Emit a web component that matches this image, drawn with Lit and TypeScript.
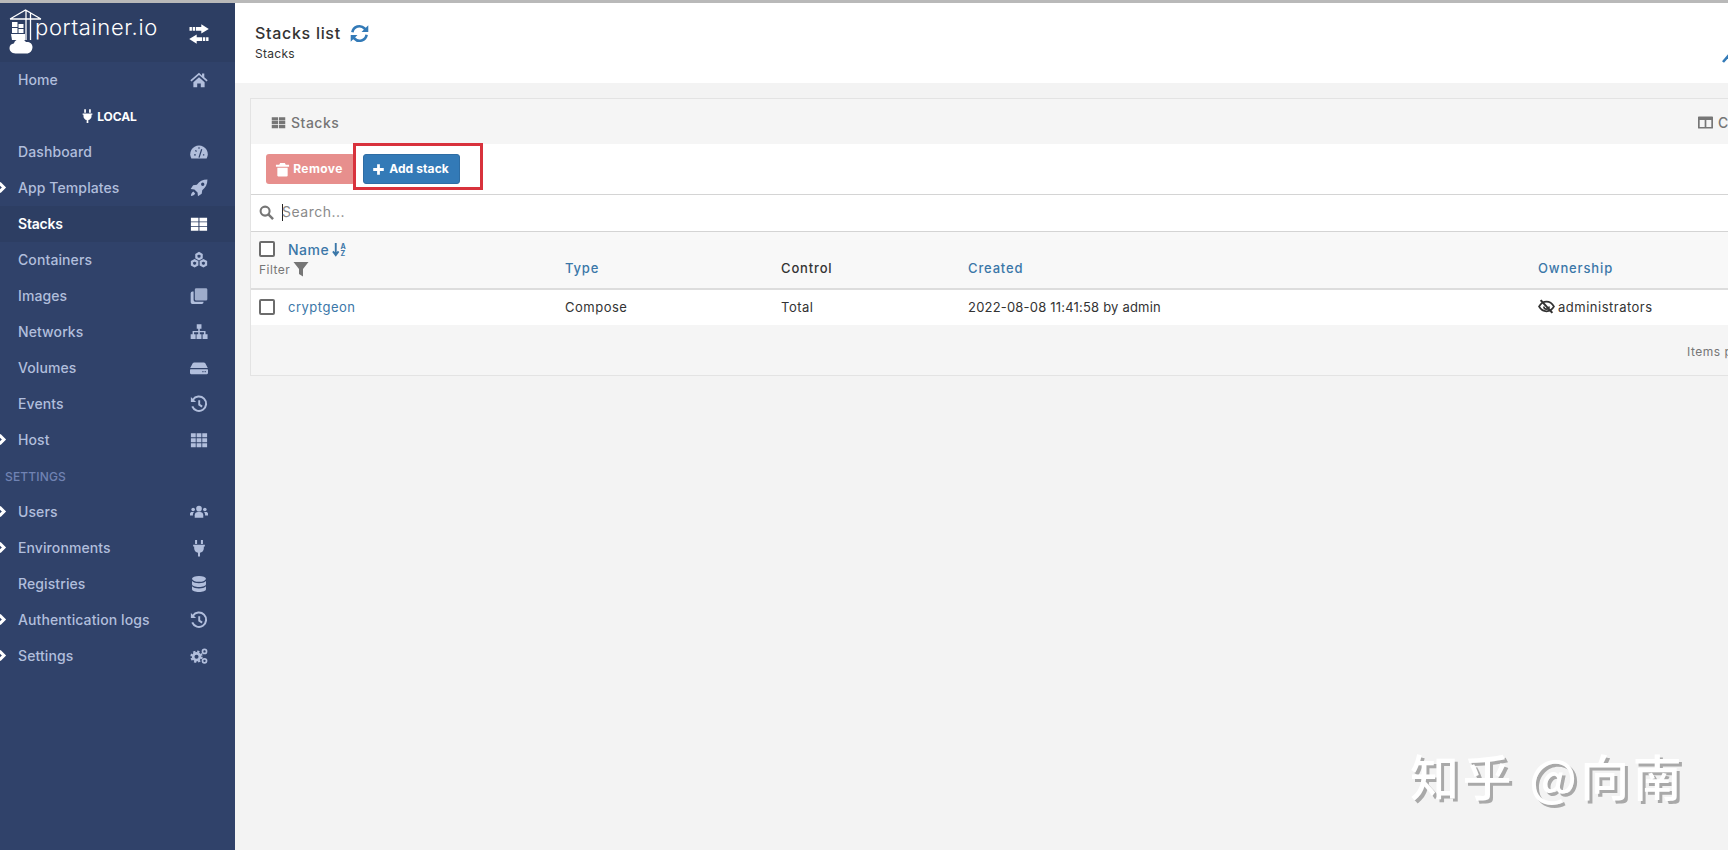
import { LitElement, html, css, svg } from "lit";
import { customElement } from "lit/decorators.js";

const hex = (cx: number, cy: number, r: number) => {
  const p: string[] = [];
  for (let i = 0; i < 6; i++) {
    const a = (Math.PI / 3) * i + Math.PI / 6;
    p.push(`${(cx + r * Math.cos(a)).toFixed(2)},${(cy + r * Math.sin(a)).toFixed(2)}`);
  }
  return p.join(" ");
};

const historyIcon = svg`<path d="M2.600 4.200A6.400 6.400 0 1 1 2 10.200" fill="none" stroke="currentColor" stroke-width="1.800"/><path d="M.8 1.800 5.400 6.200H.8z" fill="currentColor"/><path d="M8.200 4.600V8.600l2.600 1.700" fill="none" stroke="currentColor" stroke-width="1.700"/>`;

const icons: Record<string, unknown> = {
  home: svg`<path fill="currentColor" d="M8 1.600.3 8.200l1 1.100L8 3.600l6.700 5.700 1-1.100-3-2.600V2.200h-2v2.100zM3 9.900 8 5.600l5 4.300v4.600H9.600V11H6.400v3.500H3z"/>`,
  dash: svg`<path fill="currentColor" d="M8 2.200A7.800 7.800 0 0 0 1.200 13.800h13.600A7.800 7.800 0 0 0 8 2.200z"/><path d="M8 13 10.400 5.600M3.600 10.600h1.600M11.500 10.600h1.200M4.800 6.600l1 1M8 3.800v1.200" stroke="#30426a" stroke-width="1.100" fill="none"/>`,
  rocket: svg`<path fill="currentColor" fill-rule="evenodd" d="M15.500.5c-4.200 0-7.200 1.600-9.400 4.600L2.800 5.600.6 8.900l3.300.4 2.800 2.800.4 3.300 3.300-2.200.5-3.300c3-2.200 4.600-5.200 4.600-9.400zM11.300 3.200a1.500 1.500 0 1 1 0 3 1.500 1.500 0 0 1 0-3zM3 11.200c-1.300.6-2 2-2.200 3.800 1.800-.2 3.200-.9 3.800-2.200z"/>`,
  table: svg`<path fill="currentColor" d="M.8 2.400h6.700v3.400H.8zM8.400 2.400h6.800v3.400H8.400zM.8 6.500h6.700v3.400H.8zM8.400 6.500h6.800v3.400H8.400zM.8 10.600h6.700V14H.8zM8.400 10.600h6.800V14H8.400z"/>`,
  cubes: svg`<g fill="none" stroke="currentColor" stroke-width="2"><polygon points="${hex(8, 4.6, 2.7)}"/><polygon points="${hex(4.1, 10.9, 2.7)}"/><polygon points="${hex(11.9, 10.9, 2.7)}"/></g>`,
  clone: svg`<path fill="currentColor" opacity=".85" d="M5.500 1h8.700a1.200 1.200 0 0 1 1.200 1.200v8.600a1.200 1.200 0 0 1-1.200 1.200H5.500a1.200 1.200 0 0 1-1.200-1.200V2.200A1.200 1.200 0 0 1 5.500 1z"/><path fill="currentColor" d="M3.200 4v7.600A1.400 1.400 0 0 0 4.600 13H12v.6a1.500 1.500 0 0 1-1.500 1.500H2.100A1.500 1.500 0 0 1 .6 13.600V5.500A1.500 1.500 0 0 1 2.100 4z"/>`,
  sitemap: svg`<path fill="currentColor" d="M6 1h4.200v4H8.700v2h5.100v3h1.800v4.200h-4.400V10h1.200V8.300H8.700V10h1.500v4.200H5.800V10h1.500V8.300H3.600V10h1.400v4.200H.6V10h1.700V7h5V5H6z"/>`,
  hdd: svg`<path fill="currentColor" fill-rule="evenodd" d="M3.800 3h8.400c.6 0 1.100.3 1.400.8L15.800 8H.2l2.200-4.200C2.700 3.300 3.200 3 3.800 3zM.6 9h14.800c.3 0 .6.300.6.600v2.900c0 .6-.5 1-1 1H1c-.5 0-1-.4-1-1V9.600C0 9.300.3 9 .6 9zM11 10.700v1.100h1v-1.100zM13 10.700v1.100h1v-1.100z"/>`,
  history: historyIcon,
  th: svg`<path fill="currentColor" d="M.8 2h4.300v3.600H.8zM5.900 2h4.200v3.600H5.900zM10.900 2h4.300v3.600h-4.300zM.8 6.400h4.300V10H.8zM5.900 6.400h4.200V10H5.900zM10.900 6.400h4.300V10h-4.300zM.8 10.800h4.300v3.600H.8zM5.900 10.800h4.200v3.600H5.900zM10.900 10.800h4.300v3.600h-4.300z"/>`,
  users: svg`<g fill="currentColor"><circle cx="8" cy="5" r="2.500"/><circle cx="2.800" cy="5.800" r="1.600"/><circle cx="13.200" cy="5.800" r="1.600"/><path d="M4.200 13.200v-2.400C4.200 9 5.500 8 7 8h2c1.500 0 2.800 1 2.800 2.800v2.400z"/><path d="M0 11V9.400C0 8.400.8 7.900 1.800 7.900h1.700c-.6.600-.9 1.500-.9 2.400V11zM16 11V9.400c0-1-.8-1.500-1.800-1.500h-1.700c.6.600.9 1.500.9 2.400V11z"/></g>`,
  plug: svg`<path fill="currentColor" d="M4.500.8h1.800v3.700H4.500zM9.700.8h1.800v3.700H9.700zM2.800 5.200h10.400v1.500h-.9v1.600c0 2.300-1.700 3.800-3.400 4v3.200H7.100v-3.200C5.400 12.100 3.700 10.600 3.700 8.300V6.700h-.9z"/>`,
  db: svg`<g fill="currentColor"><ellipse cx="8" cy="3.400" rx="6.200" ry="2.600"/><path d="M1.800 5.400C3 6.900 5.400 7.300 8 7.300s5-.4 6.200-1.900v2.800c0 1.500-2.800 2.400-6.200 2.400s-6.200-.9-6.200-2.400z"/><path d="M1.800 10c1.200 1.500 3.600 1.900 6.200 1.900s5-.4 6.200-1.900v2.600c0 1.500-2.800 2.400-6.200 2.400s-6.200-.9-6.200-2.400z"/></g>`,
  cogs: svg`<g fill="none" stroke="currentColor"><circle cx="5.800" cy="8.600" r="3" stroke-width="2.400"/><circle cx="5.800" cy="8.600" r="4.600" stroke-width="1.800" stroke-dasharray="2 1.620"/><circle cx="12.900" cy="3.900" r="1.800" stroke-width="1.500"/><circle cx="12.900" cy="12.300" r="1.800" stroke-width="1.500"/></g>`,
};

const ic = (name: string, cls = "ic") =>
  html`<svg class=${cls} viewBox="0 0 16 16" aria-hidden="true">${icons[name]}</svg>`;

interface Item { label: string; icon: string; chev?: boolean; active?: boolean; }
const top: Item[] = [
  { label: "Dashboard", icon: "dash" },
  { label: "App Templates", icon: "rocket", chev: true },
  { label: "Stacks", icon: "table", active: true },
  { label: "Containers", icon: "cubes" },
  { label: "Images", icon: "clone" },
  { label: "Networks", icon: "sitemap" },
  { label: "Volumes", icon: "hdd" },
  { label: "Events", icon: "history" },
  { label: "Host", icon: "th", chev: true },
];
const bottom: Item[] = [
  { label: "Users", icon: "users", chev: true },
  { label: "Environments", icon: "plug", chev: true },
  { label: "Registries", icon: "db" },
  { label: "Authentication logs", icon: "history", chev: true },
  { label: "Settings", icon: "cogs", chev: true },
];

@customElement("app-root")
export class AppRoot extends LitElement {
  static styles = css`
    :host {
      display: block;
      width: 1728px;
      height: 850px;
      overflow: hidden;
      position: relative;
      background: #f3f3f3;
      font-family: Inter, "Noto Sans", sans-serif;
      color: #333;
      font-size: 13px;
      letter-spacing: 0.5px;
    }
    .topline { height: 3px; background: #b9b9b9; }
    .shell { display: flex; height: 847px; }
    .side { width: 235px; flex: none; background: #30426a; color: #b1bedc; }
    .brand { height: 59px; background: #2d3e63; display: flex; align-items: flex-start; }
    .logo { width: 34px; height: 46px; margin: 6px 0 0 9px; flex: none; }
    .wordmark {
      color: #fff;
      font-size: 22px;
      font-weight: 300;
      letter-spacing: 0.65px;
      line-height: 26px;
      margin: 11px 0 0 -8px;
      width: 154px;
      flex: none;
    }
    .swap { width: 20px; height: 20px; margin-top: 21px; color: #fff; flex: none; }
    .row {
      height: 36px;
      display: grid;
      grid-template-columns: 1fr 20px;
      align-items: center;
      padding: 0 26px 0 18px;
      font-size: 14px;
      font-weight: 500;
      position: relative;
      letter-spacing: 0.1px;
    }
    .row > span { margin-top: -2px; }
    .row.active { background: #2d3e63; color: #fff; font-weight: 600; letter-spacing: -0.2px; }
    .ic { width: 18px; height: 18px; justify-self: center; }
    .chev { position: absolute; left: -4px; top: 12px; width: 11px; height: 11px; }
    .env {
      height: 36px;
      display: flex;
      align-items: center;
      justify-content: center;
      gap: 2px;
      color: #fff;
      font-size: 12px;
      font-weight: 700;
      padding-right: 18px;
      letter-spacing: -0.1px;
    }
    .env svg { width: 15px; height: 16px; }
    .section {
      height: 36px;
      line-height: 37px;
      padding-left: 5px;
      color: #7083b3;
      font-size: 12px;
      font-weight: 500;
      letter-spacing: 0.15px;
    }
    .main { width: 1600px; flex: none; }
    .head { height: 80px; background: #fff; display: grid; grid-template-columns: 1487px 1fr; }
    .titles { padding: 20px 0 0 20px; }
    .title { display: flex; align-items: center; gap: 9px; font-size: 16px; font-weight: 500; line-height: 20px; letter-spacing: 0.7px; }
    .refresh { width: 19px; height: 19px; color: #337ab7; }
    .crumb { font-size: 12px; line-height: 14px; margin-top: 4px; letter-spacing: 0.3px; }
    .wrench { width: 16px; height: 16px; margin-top: 44px; color: #337ab7; }
    .widget { margin: 15px 0 0 15px; width: 1570px; border: 1px solid #e3e3e3; background: #f5f5f5; }
    .wh {
      height: 45px;
      background: #f5f5f5;
      display: grid;
      grid-template-columns: 1447px 1fr;
      align-items: center;
      color: #767676;
      font-size: 14px;
      padding-top: 1px;
      box-sizing: border-box;
    }
    .wh-l { display: flex; align-items: center; gap: 5px; padding-left: 20px; font-weight: 500; }
    .wh-r { display: flex; align-items: center; gap: 5px; font-weight: 500; }
    .wh svg { width: 15px; height: 15px; }
    .tools {
      height: 50px;
      background: #fff;
      border-bottom: 1px solid #d4d4d4;
      display: flex;
      align-items: center;
      gap: 8px;
      padding: 0 0 0 15px;
    }
    .btn {
      height: 30px;
      border-radius: 3px;
      display: flex;
      align-items: center;
      justify-content: center;
      gap: 4px;
      color: #fff;
      font-size: 12px;
      font-weight: 700;
      box-sizing: border-box;
      letter-spacing: 0.1px;
    }
    .btn span { margin-top: -1px; }
    .btn svg { width: 13px; height: 13px; }
    .rm { width: 89px; background: #e78f8d; letter-spacing: 0.4px; gap: 3px; padding-right: 3px; }
    .rm svg { width: 15px; height: 15px; }
    .add { width: 97px; background: #337ab7; border: 1px solid #2e6da4; padding-right: 2px; }
    .search {
      height: 36px;
      background: #fff;
      border-bottom: 1px solid #d4d4d4;
      display: flex;
      align-items: center;
      padding-left: 8px;
      color: #8a8a8a;
      font-size: 14px;
    }
    .search > span:last-child { margin: -3px 0 0 -1px; }
    .search svg { width: 15px; height: 15px; color: #767676; flex: none; margin-top: -2px; }
    .caret { width: 1px; height: 17px; background: #222; margin: -2px 0 0 8px; }
    .grid { display: grid; grid-template-columns: 306px 216px 187px 570px 1fr; }
    .thead { height: 56px; background: #f8f8f8; border-bottom: 2px solid #ddd; }
    .thead > div { padding: 0 0 12px 8px; align-self: end; font-weight: 500; font-size: 13px; letter-spacing: 0.85px; }
    .link { color: #3b77a8; }
    .check {
      width: 16px;
      height: 16px;
      border: 2px solid #6c6c6c;
      border-radius: 2px;
      box-sizing: border-box;
      background: #fff;
      flex: none;
    }
    .namehead { display: flex; align-items: center; gap: 13px; height: 20px; margin-bottom: 3px; font-size: 14px; letter-spacing: 0.5px; }
    .sort { width: 15px; height: 15px; margin-left: 3px; vertical-align: -2px; }
    .filter { display: flex; align-items: center; gap: 3px; color: #767676; font-size: 12px; font-weight: 400; line-height: 16px; letter-spacing: 0.45px; }
    .filter svg { width: 16px; height: 16px; margin-top: -3px; }
    .thead > .c1 { padding: 0 0 10px 8px; }
    .tbody { height: 35px; background: #fff; align-items: center; }
    .tbody > div { padding: 0 0 2px 8px; }
    .tbody > .date { letter-spacing: 0.2px; }
    .cname { display: flex; align-items: center; gap: 13px; }
    .own { display: flex; align-items: center; gap: 3px; }
    .own svg { width: 17px; height: 17px; }
    .foot {
      height: 50px;
      background: #f5f5f5;
      display: grid;
      grid-template-columns: 1436px 1fr;
      align-items: center;
      color: #767676;
      font-size: 12px;
    }
    .foot span { grid-column: 2; margin-top: 3px; white-space: nowrap; }
    .mark {
      position: absolute;
      left: 353px;
      top: 143px;
      width: 130px;
      height: 47px;
      border: 3px solid #d8323c;
      box-sizing: border-box;
    }
    .zhihu {
      position: absolute;
      left: 1410px;
      top: 742px;
      font-family: "Noto Sans CJK SC", sans-serif;
      font-size: 49px;
      font-weight: 500;
      line-height: 66px;
      color: #fff;
      text-shadow: 3px 3px 0 #a9a9a9;
      letter-spacing: 3.4px;
      white-space: pre;
    }
  `;

  private row(i: Item) {
    return html`<div class="row ${i.active ? "active" : ""}">
      ${i.chev
        ? html`<svg class="chev" viewBox="0 0 10 10"><path d="M3.200 1 7.200 5 3.200 9" fill="none" stroke="#fff" stroke-width="2.800"/></svg>`
        : ""}
      <span>${i.label}</span>${ic(i.icon)}
    </div>`;
  }

  render() {
    return html`
      <div class="topline"></div>
      <div class="shell">
        <nav class="side">
          <div class="brand">
            <svg class="logo" viewBox="0 0 34 46">
              <g fill="none" stroke="#fff" stroke-width="1.300">
                <path d="M1 10 16.500 1 32 10M1 10H32M17 1V31M21.500 3.500V31"/>
              </g>
              <path fill="#fff" d="M3 13h5.500v5H3zM9.500 15h5v4h-5zM3 19h5.500v5H3zM9.500 20h5v4h-5z"/>
              <path fill="#fff" d="M2 25h14v6H3z"/>
              <path fill="#fff" d="M6.500 44.500c-3.800 0-6-2.300-6-5.400 0-2.800 2-4.500 4.300-4.700C6 31.300 8.600 29.800 11.400 29.800c2.500 0 4.500 1.300 5.500 3.200 3.200-.6 6.600 1.400 6.600 5 0 3.800-2.700 6.500-6 6.500z"/>
            </svg>
            <div class="wordmark">portainer.io</div>
            <svg class="swap" viewBox="0 0 20 20" fill="currentColor">
              <path d="M.5 3h2.400v3.800H.5zM3.700 3H6v3.800H3.700zM6.800 3H12.300V.2L19.800 4.900 12.300 9.600V6.800H6.800z"/>
              <path d="M19.500 13.200h-2.400V17h2.400zM16.300 13.200H14V17h2.300zM13.200 13.200H7.700v-2.800L.2 15.100l7.500 4.700V17h5.500z"/>
            </svg>
          </div>
          ${this.row({ label: "Home", icon: "home" })}
          <div class="env"><svg viewBox="0 0 16 16">${icons.plug}</svg><span>LOCAL</span></div>
          ${top.map((i) => this.row(i))}
          <div class="section">SETTINGS</div>
          ${bottom.map((i) => this.row(i))}
        </nav>
        <main class="main">
          <header class="head">
            <div class="titles">
              <div class="title">
                <span>Stacks list</span>
                <svg class="refresh" viewBox="0 0 16 16" fill="none" stroke="currentColor" stroke-width="2.200">
                  <path d="M2 7a6 6 0 0 1 10.300-3.200L14 5.500"/><path d="M14 9a6 6 0 0 1-10.300 3.200L2 10.500"/>
                  <path d="M15.400 1v5.700H9.700zM.6 15V9.300h5.700z" fill="currentColor" stroke="none"/>
                </svg>
              </div>
              <div class="crumb">Stacks</div>
            </div>
            <svg class="wrench" viewBox="0 0 16 16"><path d="M1 15 8 7" stroke="currentColor" stroke-width="2.600" fill="none"/><path fill="currentColor" d="M6.500 5.500C7 2.500 10 .5 13.500 1.500L10.500 4.500l1.200 1.500z"/></svg>
          </header>

          <section class="widget">
            <div class="wh">
              <div class="wh-l"><svg viewBox="0 0 16 16">${icons.table}</svg><span>Stacks</span></div>
              <div class="wh-r">
                <svg viewBox="0 0 16 16"><path fill="currentColor" fill-rule="evenodd" d="M1 1.500h14c.5 0 1 .4 1 1v11c0 .6-.5 1-1 1H1c-.5 0-1-.4-1-1v-11c0-.6.5-1 1-1zM1.800 5.200v7.500h5.300V5.200zM8.900 5.200v7.500h5.300V5.200z"/></svg>
                <span>Columns</span>
              </div>
            </div>
            <div class="tools">
              <div class="btn rm">
                <svg viewBox="0 0 16 16"><path fill="currentColor" d="M5.500 1h5l1 2H15v2H1V3h3.500zM2.500 6h11v8.500c0 .6-.5 1-1 1h-9c-.5 0-1-.4-1-1z"/></svg>
                <span>Remove</span>
              </div>
              <div class="btn add">
                <svg viewBox="0 0 16 16"><path fill="currentColor" d="M6.300 1.500h3.400v4.800h4.800v3.400H9.700v4.800H6.300V9.700H1.500V6.300h4.800z"/></svg>
                <span>Add stack</span>
              </div>
            </div>
            <div class="search">
              <svg viewBox="0 0 16 16"><circle cx="6.500" cy="6.500" r="4.800" fill="none" stroke="currentColor" stroke-width="2.200"/><path d="M10 10l5 5" stroke="currentColor" stroke-width="2.600"/></svg>
              <span class="caret"></span><span>Search...</span>
            </div>
            <div class="grid thead">
              <div class="c1">
                <div class="namehead"><span class="check"></span>
                  <span class="link">Name<svg class="sort" viewBox="0 0 16 16"><path d="M4 1v12M1 10l3 4 3-4" fill="none" stroke="currentColor" stroke-width="2"/><text x="9" y="7" font-size="7.500" font-weight="700" fill="currentColor">A</text><text x="9" y="15" font-size="7.500" font-weight="700" fill="currentColor">Z</text></svg></span>
                </div>
                <div class="filter"><span>Filter</span><svg viewBox="0 0 16 16"><path fill="currentColor" d="M.5 1h15L10 8v7.500L6 13V8z"/></svg></div>
              </div>
              <div class="link">Type</div>
              <div>Control</div>
              <div class="link">Created</div>
              <div class="link">Ownership</div>
            </div>
            <div class="grid tbody">
              <div class="cname"><span class="check"></span><span class="link">cryptgeon</span></div>
              <div>Compose</div>
              <div>Total</div>
              <div class="date">2022-08-08 11:41:58 by admin</div>
              <div class="own">
                <svg viewBox="0 0 16 16"><path d="M1 8c1.800-3 4.200-4.500 7-4.500S13.200 5 15 8c-1.800 3-4.200 4.500-7 4.500S2.800 11 1 8z" fill="none" stroke="currentColor" stroke-width="1.600"/><path d="M5.500 8a2.500 2.500 0 0 0 5 0" fill="none" stroke="currentColor" stroke-width="1.500"/><path d="M2.500 2 13.500 14" stroke="currentColor" stroke-width="2"/></svg>
                <span>administrators</span>
              </div>
            </div>
            <div class="foot"><span>Items per page</span></div>
          </section>
        </main>
      </div>
      <div class="mark"></div>
      <div class="zhihu">知乎 @向南</div>
    `;
  }
}
